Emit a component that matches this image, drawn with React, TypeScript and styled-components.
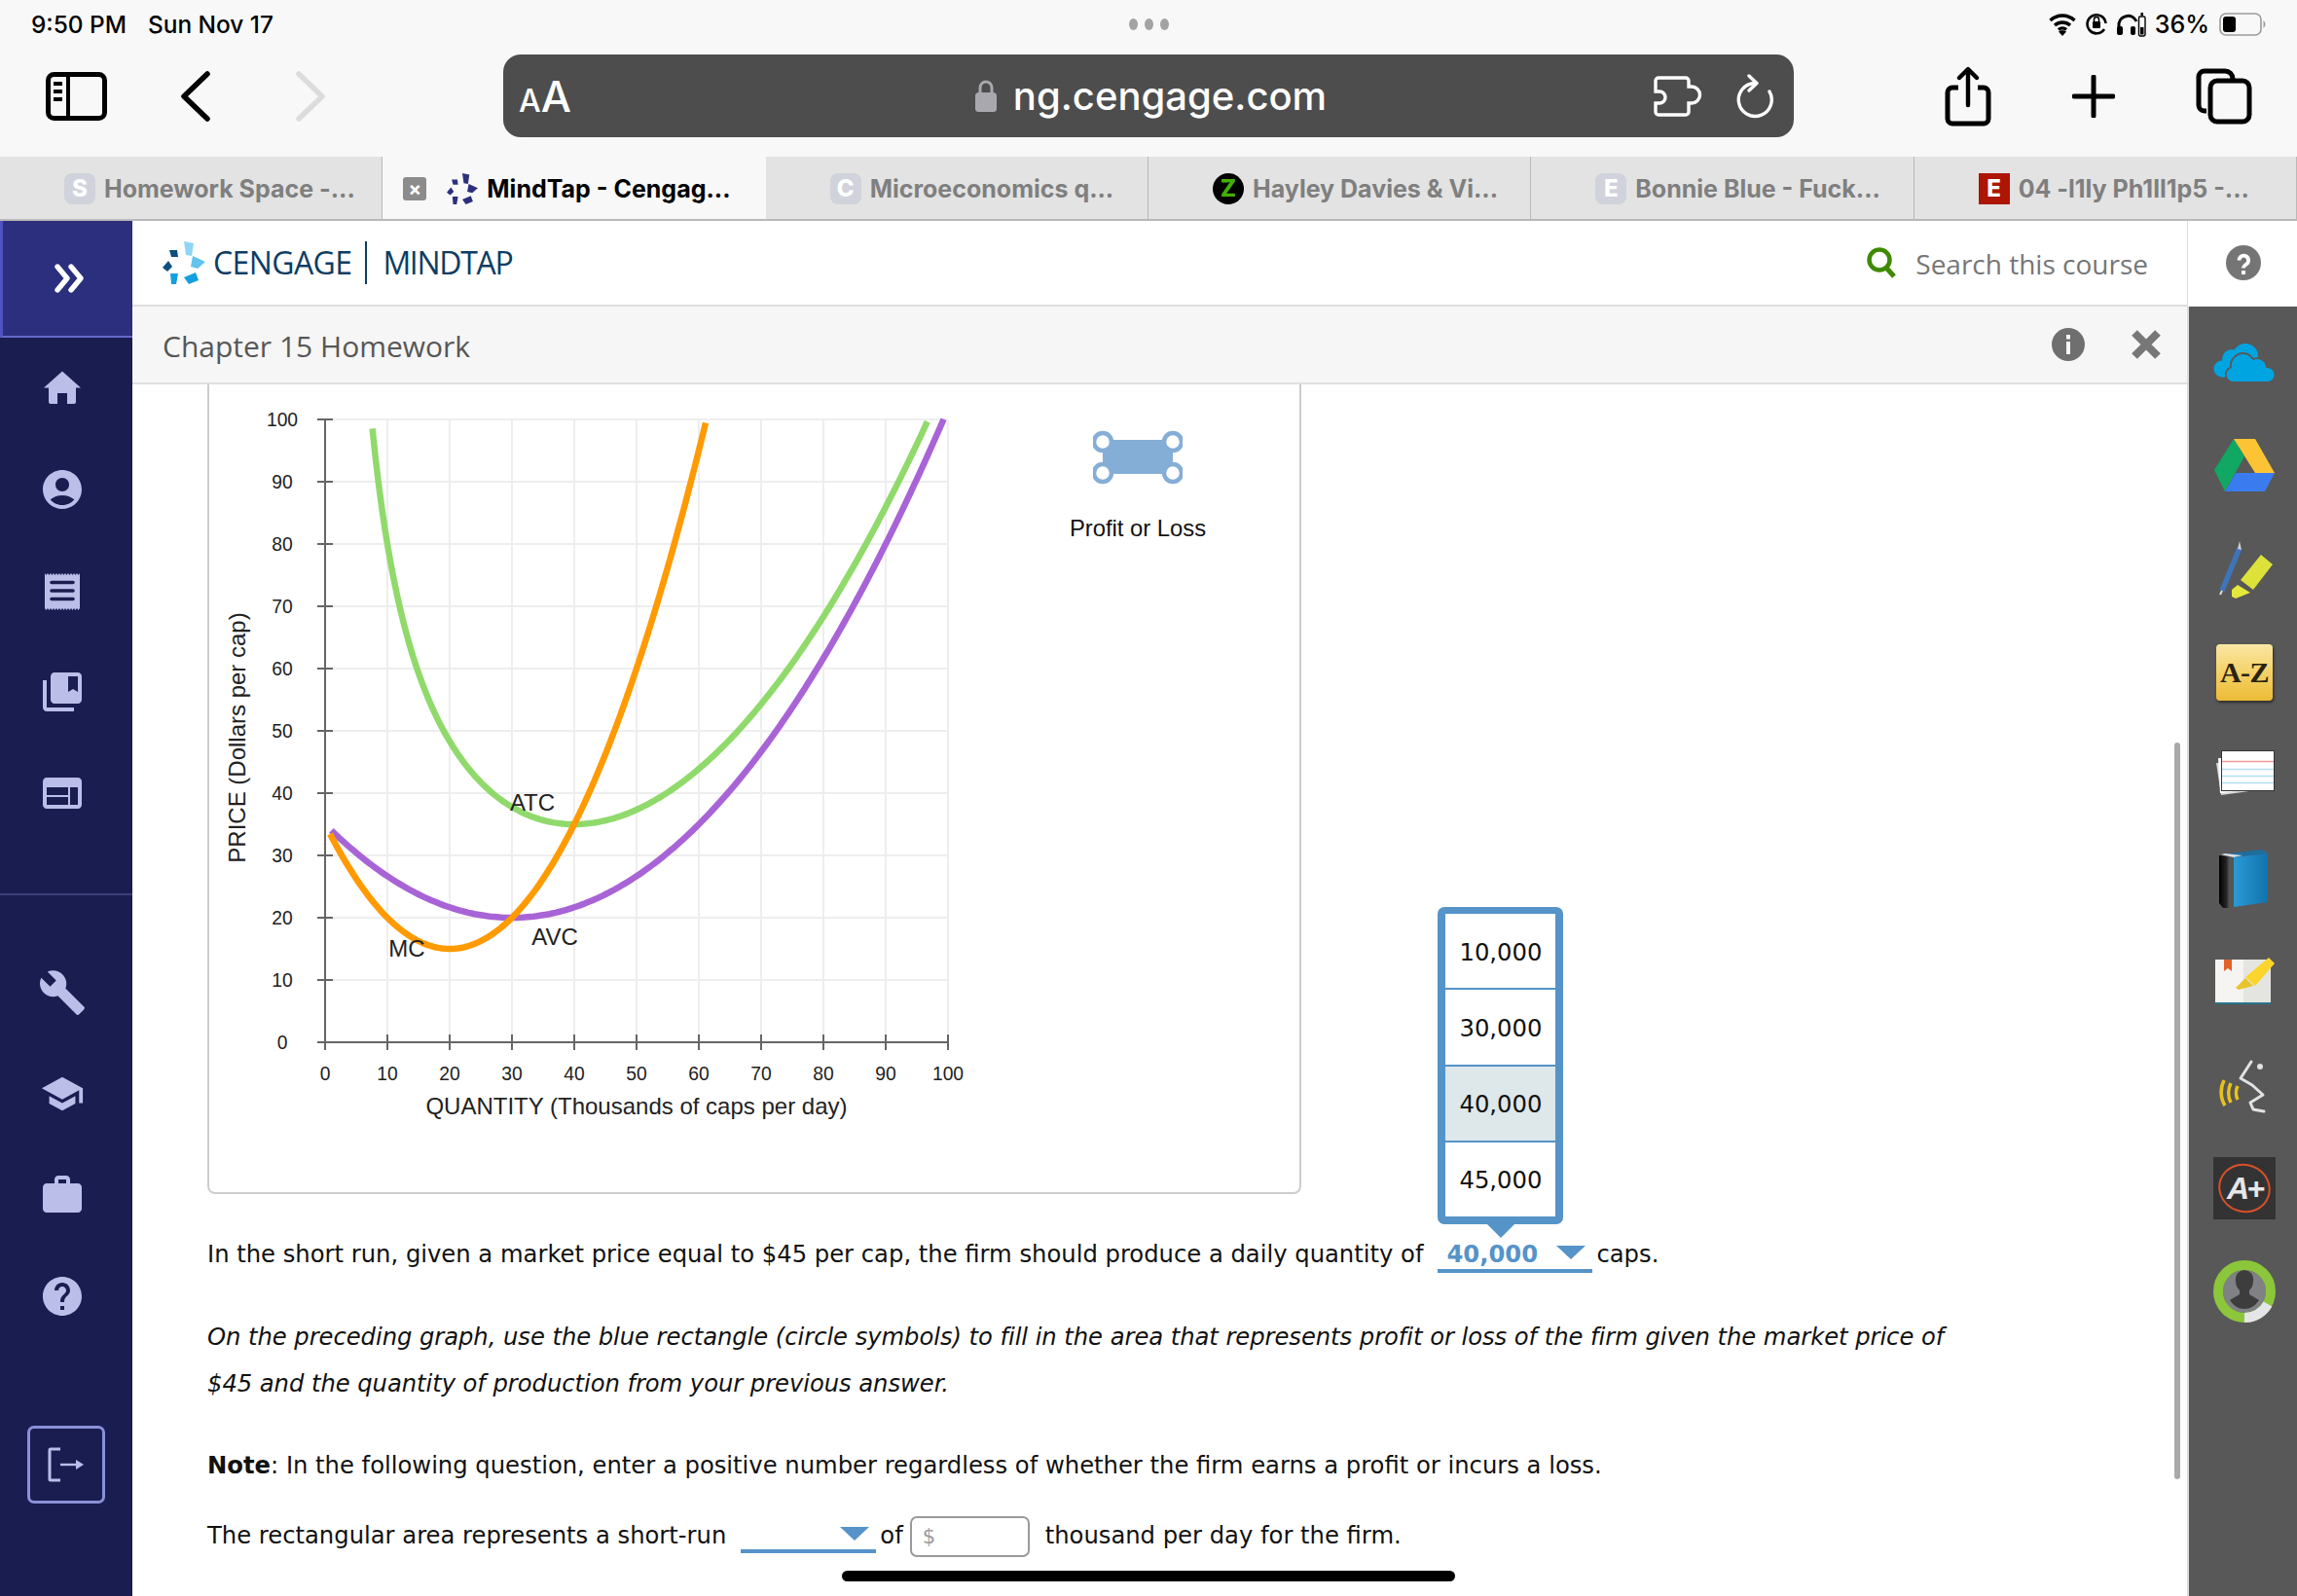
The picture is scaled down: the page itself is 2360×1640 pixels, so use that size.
import React from 'react';
import styled, { createGlobalStyle } from 'styled-components';
import { MdAccountCircle, MdCollectionsBookmark, MdWeb, MdBuild, MdSchool, MdWork, MdHelp } from 'react-icons/md';

const Global = createGlobalStyle`
  html, body { margin: 0; padding: 0; background: #fff; }
  * { box-sizing: border-box; }
`;

const Frame = styled.div`
  position: relative;
  width: 2360px;
  height: 1640px;
  overflow: hidden;
  display: flex;
  flex-direction: column;
  background: #f8f8f8;
  font-family: Inter, "Liberation Sans", sans-serif;
`;

/* ---------- iPad status bar ---------- */
const StatusBar = styled.div`
  height: 50px;
  display: grid;
  grid-template-columns: 1fr auto 1fr;
  align-items: center;
  font-size: 24.4px;
  font-weight: 500;
  color: #000;
`;
const StatusLeft = styled.div`display: flex; gap: 22px; padding-left: 32px;`;
const Dots = styled.div`display: flex; gap: 7px;`;
const Dot = styled.span`width: 9px; height: 12px; border-radius: 50%; background: #a3a3a3;`;
const StatusRight = styled.div`display: flex; justify-content: flex-end; align-items: center; padding-right: 32px; gap: 10px;`;
const StatusSvg = styled.svg`display: block; flex: none;`;
const BatteryPct = styled.span`font-size: 25px; font-weight: 500; margin-left: -1px;`;

/* ---------- Safari toolbar ---------- */
const Toolbar = styled.div`
  height: 111px;
  display: flex;
  align-items: center;
  padding: 0 0 14px 47px;
`;
const Nav = styled.div`display: flex; align-items: center; width: 470px;`;
const ToolIcon = styled.svg<{ $ml?: number }>`display: block; flex: none; margin-left: ${p => p.$ml ?? 0}px;`;
const UrlBar = styled.div`
  width: 1326px;
  height: 85px;
  border-radius: 18px;
  background: #4d4d4d;
  color: #fff;
  display: grid;
  grid-template-columns: 1fr auto 1fr;
  align-items: center;
  padding: 0 20px 0 16px;
`;
const AaText = styled.div`font-weight: 500; font-size: 44px; display: flex; align-items: baseline; line-height: 1;`;
const AaSmall = styled.span`font-size: 32px;`;
const Host = styled.div`display: flex; align-items: center; gap: 17px; margin-left: 9px;`;
const HostText = styled.span`font-size: 40px; font-weight: 500; line-height: 1;`;
const UrlRight = styled.div`display: flex; justify-content: flex-end; align-items: center; gap: 32px;`;
const ToolRight = styled.div`display: flex; align-items: center; margin-left: 155px;`;

/* ---------- Tabs ---------- */
const Tabs = styled.div`
  height: 66px;
  display: grid;
  grid-template-columns: repeat(6, 1fr);
  background: #e3e3e3;
  border-bottom: 2px solid #b9b9b9;
`;
const Tab = styled.div<{ $active?: boolean }>`
  display: flex;
  align-items: center;
  gap: 9px;
  padding: 1px 0 0 ${p => (p.$active ? 21 : 66)}px;
  background: ${p => (p.$active ? '#f8f8f8' : 'transparent')};
  color: ${p => (p.$active ? '#000' : '#7f7f7f')};
  border-right: 1px solid ${p => (p.$active ? 'transparent' : '#b9b9b9')};
  font-size: 25px;
  font-weight: 700;
  white-space: nowrap;
`;
const CloseBox = styled.div`
  width: 24px; height: 24px; border-radius: 3px; background: #8c8c8c; color: #fff;
  display: flex; align-items: center; justify-content: center; margin-right: 12px;
  font-size: 20px; font-weight: 700; line-height: 1;
`;
const Favicon = styled.div<{ $bg: string; $fg?: string; $round?: boolean }>`
  width: 32px; height: 32px; flex: none;
  border-radius: ${p => (p.$round ? '50%' : p.$bg === '#ad1505' ? '0' : '8px')};
  background: ${p => p.$bg};
  color: ${p => p.$fg ?? '#fff'};
  display: flex; align-items: center; justify-content: center;
  font-size: 24px; font-weight: 800; line-height: 1;
`;

/* ---------- Main three-column app ---------- */
const Main = styled.div`flex: 1; display: flex; min-height: 0; background: #fff;`;

const Sidebar = styled.nav`
  width: 136px;
  flex: none;
  background: #1a1d50;
  display: flex;
  flex-direction: column;
`;
const Toggle = styled.div`
  height: 120px;
  flex: none;
  background: #2b2f7e;
  border-left: 3px solid #4f53c0;
  border-bottom: 2px solid #6468cc;
  display: flex;
  align-items: center;
  padding-left: 53px;
`;
const NavGroup = styled.div<{ $divided?: boolean }>`
  display: flex;
  flex-direction: column;
  padding: ${p => (p.$divided ? '48px 0 0' : '0 0 51px')};
  border-bottom: ${p => (p.$divided ? '0' : '2px solid #3c4078')};
`;
const NavItem = styled.div`
  width: 128px;
  height: 104px;
  flex: none;
  display: flex;
  align-items: center;
  justify-content: center;
  color: #babee8;
`;
const NavSvg = styled.svg`display: block; color: #babee8;`;
const Logout = styled.div`
  width: 80px;
  height: 80px;
  margin: 81px 0 0 28px;
  border: 3.5px solid #8a90d8;
  border-radius: 7px;
  display: flex;
  align-items: center;
  justify-content: center;
`;

const Center = styled.div`flex: 1; min-width: 0; display: flex; flex-direction: column; position: relative;`;
const BrandBar = styled.header`
  height: 88px;
  flex: none;
  display: flex;
  align-items: center;
  padding: 0 40px 0 31px;
  border-bottom: 2px solid #dedede;
  background: #fff;
`;
const LogoSvg = styled.svg`flex: none; margin-right: 8px;`;
const BrandWord = styled.span<{ $ls: number }>`
  font-family: "Open Sans", sans-serif;
  font-size: 32px;
  font-weight: 400;
  letter-spacing: ${p => p.$ls}px;
  color: #0d3d64;
  line-height: 1;
`;
const BrandRule = styled.span`width: 2px; height: 44px; background: #0d3d64; margin: 0 16px 0 14px;`;
const SearchBox = styled.div`margin-left: auto; display: flex; align-items: center; gap: 19px;`;
const SearchText = styled.span`font-family: "Open Sans", sans-serif; font-size: 28px; color: #767676; font-weight: 400; padding-top: 2px;`;

const TitleBar = styled.div`
  height: 80px;
  flex: none;
  display: flex;
  align-items: center;
  padding: 0 26px 0 31px;
  background: #f6f6f6;
  border-bottom: 2px solid #e0e0e0;
`;
const Title = styled.h1`
  margin: 0;
  padding-top: 2px;
  font-family: "Open Sans", sans-serif;
  font-size: 30px;
  font-weight: 400;
  color: #575757;
`;
const TitleActions = styled.div`margin-left: auto; display: flex; align-items: center; gap: 47px;`;

const Content = styled.div`
  flex: 1;
  min-height: 0;
  overflow: hidden;
  padding-left: 77px;
  font-family: "DejaVu Sans", Verdana, sans-serif;
  font-size: 24.25px;
  color: #111;
`;
const GraphPanel = styled.section`
  width: 1124px;
  height: 832px;
  border: 2px solid #cdcdcd;
  border-top: 0;
  border-radius: 0 0 8px 8px;
  display: flex;
`;
const GraphSvg = styled.svg`display: block; flex: none;`;
const Legend = styled.div`
  width: 200px;
  margin-left: 74px;
  padding-top: 47px;
  display: flex;
  flex-direction: column;
  align-items: center;
`;
const LegendLabel = styled.div`
  margin-top: 31px;
  font-family: "Liberation Sans", Arial, sans-serif;
  font-size: 23.8px;
  line-height: 28px;
  color: #111;
  white-space: nowrap;
`;
const ChartLabel = styled.text`
  font-family: "Liberation Sans", Arial, sans-serif;
  font-size: 19.3px;
  fill: #222;
  text-anchor: middle;
`;
const AxisTitle = styled(ChartLabel)`font-size: 24px;`;

const Row = styled.div<{ $mt: number }>`
  margin-top: ${p => p.$mt}px;
  min-height: 48px;
  line-height: 48px;
  display: flex;
  align-items: flex-start;
  white-space: pre;
`;
const ItalicBlock = styled.p<{ $mt: number }>`
  margin: ${p => p.$mt}px 0 0;
  line-height: 48px;
  font-style: italic;
  white-space: pre;
  letter-spacing: -0.05px;
`;
const Strong = styled.strong`font-weight: 700;`;
const Select = styled.div<{ $width: number; $height: number; $ml: number; $mr: number }>`
  position: relative;
  flex: none;
  width: ${p => p.$width}px;
  height: ${p => p.$height}px;
  margin: 0 ${p => p.$mr}px 0 ${p => p.$ml}px;
  border-bottom: 4px solid #5593c8;
  display: flex;
  justify-content: space-between;
  padding: 0 7px 0 9px;
  color: #5593c8;
  font-weight: 700;
`;
const Caret = styled.span`
  margin: 15px 0 0 auto;
  width: 0;
  height: 0;
  border-left: 15px solid transparent;
  border-right: 15px solid transparent;
  border-top: 14px solid #5593c8;
`;
const Popover = styled.div`
  position: absolute;
  left: 0;
  bottom: 46px;
  width: 129px;
  height: 326px;
  border: 8px solid #5593c8;
  border-top-width: 7px;
  border-radius: 7px;
  background: #fff;
  color: #111;
  font-weight: 400;
  display: flex;
  flex-direction: column;
  z-index: 2;
  &::after {
    content: '';
    position: absolute;
    left: 43px;
    bottom: -22px;
    border-left: 14px solid transparent;
    border-right: 14px solid transparent;
    border-top: 14px solid #5593c8;
  }
`;
const Option = styled.div<{ $selected?: boolean }>`
  flex: 1;
  display: flex;
  align-items: center;
  justify-content: center;
  padding-top: 3px;
  background: ${p => (p.$selected ? '#dee7ea' : '#fff')};
  border-bottom: 2px solid #5593c8;
  line-height: 1;
  &:last-child { border-bottom: 0; }
`;
const MoneyInput = styled.div`
  flex: none;
  width: 123px;
  height: 42px;
  margin: 4px 16px 0 7px;
  padding-left: 11px;
  border: 2px solid #9a9a9a;
  border-radius: 7px;
  color: #9a9a9a;
  font-size: 21px;
  line-height: 38px;
`;
const Scrollbar = styled.div`
  position: absolute;
  right: 7px;
  top: 536px;
  width: 6px;
  height: 757px;
  border-radius: 3px;
  background: #a9a9a9;
`;

const Rail = styled.aside`
  width: 113px;
  flex: none;
  display: flex;
  flex-direction: column;
`;
const HelpCell = styled.div`
  height: 88px;
  flex: none;
  background: #fff;
  border-left: 1px solid #dedede;
  display: flex;
  align-items: center;
  justify-content: center;
  padding: 0 0 2px 1px;
`;
const RailBody = styled.div`
  flex: 1;
  background: #585858;
  border-left: 2px solid #dcdcdc;
  display: flex;
  flex-direction: column;
  align-items: center;
  gap: 42px;
  padding: 26px 0 0 3px;
`;
const RailSlot = styled.div`width: 64px; height: 64px; flex: none; display: flex; align-items: center; justify-content: center;`;
const RailSvg = styled.svg`display: block;`;
const AzTile = styled.div`
  width: 58px;
  height: 58px;
  border-radius: 4px;
  background: linear-gradient(#fae7a4, #f3cf62 55%, #ecbb35);
  box-shadow: 1px 2px 3px rgba(0, 0, 0, 0.5);
  color: #2a2310;
  font-family: "Liberation Serif", serif;
  font-weight: 700;
  font-size: 30px;
  letter-spacing: -0.5px;
  display: flex;
  align-items: center;
  justify-content: center;
`;
const GradeTile = styled.div`
  position: relative;
  width: 64px;
  height: 64px;
  background: #333;
  display: flex;
  align-items: center;
  justify-content: center;
`;
const GradeRing = styled.span`
  position: absolute;
  left: 5px;
  top: 7px;
  width: 54px;
  height: 50px;
  border: 2.5px solid #d8502a;
  border-radius: 50%;
  transform: rotate(20deg);
`;
const GradeText = styled.span`
  font-family: "Liberation Sans", sans-serif;
  font-style: italic;
  font-weight: 700;
  font-size: 32px;
  letter-spacing: -3px;
  color: #e6e6e6;
  line-height: 1;
`;
const HomeBar = styled.div`
  position: absolute;
  left: 865px;
  top: 1614px;
  width: 630px;
  height: 11px;
  border-radius: 6px;
  background: #000;
`;

/* ---------- data ---------- */
const X = (q: number) => 119 + 6.4 * q;
const Y = (p: number) => 676 - 6.4 * p;
const avc = (q: number) => 20 + ((q - 30) * (q - 30)) / 60;
const mc = (q: number) => avc(q) + (q * (q - 30)) / 30;
const atc = (q: number) => avc(q) + 533.3 / q;
const curve = (fn: (q: number) => number, from: number, to: number) => {
  const pts: string[] = [];
  for (let q = from; q < to; q += 0.5) pts.push(`${X(q).toFixed(1)},${Y(fn(q)).toFixed(1)}`);
  pts.push(`${X(to).toFixed(1)},${Y(fn(to)).toFixed(1)}`);
  return 'M' + pts.join('L');
};
const ticks = [0, 10, 20, 30, 40, 50, 60, 70, 80, 90, 100];

const receiptPath = (() => {
  const n = 12;
  const w = 36 / n;
  let top = 'M6 6';
  for (let i = 0; i < n; i++) top += `l${w / 2} 2l${w / 2} -2`;
  let bot = 'V42';
  for (let i = 0; i < n; i++) bot += `l${-w / 2} 2l${-w / 2} -2`;
  return top + bot + 'Z';
})();

const Graph = () => (
  <GraphSvg width={780} height={780} viewBox="0 0 780 780">
    {ticks.slice(1).map(t => (
      <g key={t} stroke="#eeeeee" strokeWidth={2}>
        <line x1={X(0)} x2={X(100)} y1={Y(t)} y2={Y(t)} />
        <line x1={X(t)} x2={X(t)} y1={Y(0)} y2={Y(100)} />
      </g>
    ))}
    <g stroke="#666" strokeWidth={2}>
      <line x1={X(0)} x2={X(0)} y1={Y(100)} y2={Y(0)} />
      <line x1={X(0)} x2={X(100)} y1={Y(0)} y2={Y(0)} />
      {ticks.map(t => (
        <g key={t}>
          <line x1={X(0) - 8} x2={X(0) + 8} y1={Y(t)} y2={Y(t)} />
          <line x1={X(t)} x2={X(t)} y1={Y(0) - 8} y2={Y(0) + 8} />
        </g>
      ))}
    </g>
    {ticks.map(t => (
      <g key={t}>
        <ChartLabel x={75} y={Y(t) + 7}>{t}</ChartLabel>
        <ChartLabel x={X(t)} y={715}>{t}</ChartLabel>
      </g>
    ))}
    <path d={curve(atc, 7.6, 96.7)} fill="none" stroke="#90da6c" strokeWidth={6.5} />
    <path d={curve(avc, 1, 99.3)} fill="none" stroke="#a864d6" strokeWidth={6.5} />
    <path d={curve(mc, 0.8, 61.1)} fill="none" stroke="#ff9a00" strokeWidth={6.5} />
    <AxisTitle x={439} y={750}>QUANTITY (Thousands of caps per day)</AxisTitle>
    <AxisTitle transform="translate(37 363) rotate(-90)">PRICE (Dollars per cap)</AxisTitle>
    <AxisTitle x={332} y={438}>ATC</AxisTitle>
    <AxisTitle x={355} y={576}>AVC</AxisTitle>
    <AxisTitle x={203} y={588}>MC</AxisTitle>
  </GraphSvg>
);

const CengageMark = ({ c }: { c: string[] }) => (
  <>
    <polygon points="22,0 32,2 30,15 24,14" fill={c[0]} />
    <polygon points="7,9 15,9 16,16 9,16" fill={c[1]} />
    <polygon points="0,27 6,20 10,26 5,31" fill={c[1]} />
    <polygon points="31,15 44,21 36,28 29,26" fill={c[2]} />
    <polygon points="22,37 34,32 37,40 27,44" fill={c[3]} />
    <polygon points="8,33 16,33 14,44 9,44" fill={c[3]} />
  </>
);

export default function App() {
  return (
    <Frame>
      <Global />
      <StatusBar>
        <StatusLeft><span>9:50 PM</span><span>Sun Nov 17</span></StatusLeft>
        <Dots><Dot /><Dot /><Dot /></Dots>
        <StatusRight>
          <StatusSvg width="28" height="24" viewBox="0 0 28 24">
            <path d="M1.5 8 A18 18 0 0 1 26.5 8 M6 13 A12 12 0 0 1 22 13 M10 17.5 A6 6 0 0 1 18 17.5" fill="none" stroke="#000" strokeWidth="3.4" />
            <path d="M14 24l-4-4.5a6 6 0 0 1 8 0z" />
          </StatusSvg>
          <StatusSvg width="22" height="24" viewBox="0 0 22 24">
            <path d="M19 17A9.5 9.5 0 1 1 20.5 11" fill="none" stroke="#000" strokeWidth="2.6" />
            <rect x="7" y="9" width="8" height="7" rx="1" />
            <path d="M8.5 9V7a2.5 2.5 0 0 1 5 0v2" fill="none" stroke="#000" strokeWidth="1.6" />
          </StatusSvg>
          <StatusSvg width="30" height="26" viewBox="0 0 30 26">
            <path d="M2 20V12a9.5 9.5 0 0 1 18 -2" fill="none" stroke="#000" strokeWidth="3" />
            <rect x="0" y="15" width="6" height="9" rx="2" />
            <rect x="14" y="15" width="5" height="9" rx="2" />
            <rect x="22.5" y="5" width="6.5" height="20" rx="1.4" fill="none" stroke="#000" strokeWidth="1.4" />
            <rect x="24" y="16" width="3.5" height="7.5" />
            <rect x="24.5" y="1" width="2.5" height="3" />
          </StatusSvg>
          <BatteryPct>36%</BatteryPct>
          <StatusSvg width="48" height="24" viewBox="0 0 48 24">
            <rect x="1" y="1" width="42" height="22" rx="6" fill="none" stroke="#9a9a9a" strokeWidth="1.6" />
            <rect x="4" y="4" width="13" height="16" rx="3" />
            <path d="M45.5 8a5 5 0 0 1 0 8z" fill="#9a9a9a" />
          </StatusSvg>
        </StatusRight>
      </StatusBar>

      <Toolbar>
        <Nav>
          <ToolIcon width="63" height="50" viewBox="0 0 63 50">
            <rect x="2.5" y="2.5" width="58" height="45" rx="6" fill="none" stroke="#000" strokeWidth="5" />
            <line x1="23" y1="3" x2="23" y2="47" stroke="#000" strokeWidth="4" />
            <rect x="8" y="10" width="9" height="4" fill="#000" />
            <rect x="8" y="18" width="9" height="4" fill="#000" />
            <rect x="8" y="26" width="9" height="4" fill="#000" />
          </ToolIcon>
          <ToolIcon $ml={76} width="30" height="52" viewBox="0 0 30 52">
            <polyline points="27,3 3,26 27,49" fill="none" stroke="#000" strokeWidth="5.5" strokeLinecap="round" strokeLinejoin="round" />
          </ToolIcon>
          <ToolIcon $ml={88} width="30" height="52" viewBox="0 0 30 52">
            <polyline points="3,3 27,26 3,49" fill="none" stroke="#dcdcdc" strokeWidth="5.5" strokeLinecap="round" strokeLinejoin="round" />
          </ToolIcon>
        </Nav>
        <UrlBar>
          <AaText><AaSmall>A</AaSmall>A</AaText>
          <Host>
            <svg width="22" height="33" viewBox="0 0 22 33">
              <path d="M5 15V8a6 6 0 0 1 12 0v7" fill="none" stroke="#a8a8ae" strokeWidth="3" />
              <rect x="0" y="13" width="22" height="20" rx="3.5" fill="#a8a8ae" />
            </svg>
            <HostText>ng.cengage.com</HostText>
          </Host>
          <UrlRight>
            <svg width="52" height="42" viewBox="0 0 52 42">
              <path d="M4 2h28a3 3 0 0 1 3 3v6h3a7.5 7.5 0 0 1 0 17h-3v9a3 3 0 0 1-3 3H4a3 3 0 0 1-3-3v-9h4a5 5 0 0 0 0-12H1V5a3 3 0 0 1 3-3z" fill="none" stroke="#fff" strokeWidth="3.4" transform="translate(1 0)" />
            </svg>
            <svg width="40" height="46" viewBox="0 0 40 46">
              <path d="M20 9.500A17 17 0 1 0 35 18" fill="none" stroke="#fff" strokeWidth="3.4" strokeLinecap="round" />
              <path d="M14 2l8 7.500-8 7.500" fill="none" stroke="#fff" strokeWidth="3.4" strokeLinecap="round" strokeLinejoin="round" />
            </svg>
          </UrlRight>
        </UrlBar>
        <ToolRight>
          <ToolIcon width="48" height="62" viewBox="0 0 48 62">
            <path d="M14 22H8a5 5 0 0 0-5 5v27a5 5 0 0 0 5 5h32a5 5 0 0 0 5-5V27a5 5 0 0 0-5-5h-6" fill="none" stroke="#000" strokeWidth="5" />
            <path d="M24 40V4M15 12l9-9 9 9" fill="none" stroke="#000" strokeWidth="4.4" strokeLinecap="round" strokeLinejoin="round" />
          </ToolIcon>
          <ToolIcon $ml={83} width="44" height="44" viewBox="0 0 44 44">
            <path d="M22 2v40M2 22h40" stroke="#000" strokeWidth="5" strokeLinecap="round" />
          </ToolIcon>
          <ToolIcon $ml={83} width="58" height="58" viewBox="0 0 58 58">
            <path d="M11 44H9a6 6 0 0 1-6-6V9a6 6 0 0 1 6-6h21a8 8 0 0 1 8 8" fill="none" stroke="#000" strokeWidth="5" />
            <rect x="15" y="13" width="40" height="42" rx="7" fill="none" stroke="#000" strokeWidth="5" />
          </ToolIcon>
        </ToolRight>
      </Toolbar>

      <Tabs>
        <Tab><Favicon $bg="#d0d2dc">S</Favicon>Homework Space -...</Tab>
        <Tab $active>
          <CloseBox>×</CloseBox>
          <svg width="32" height="32" viewBox="0 0 44 44"><CengageMark c={['#2b2f7e', '#2b2f7e', '#2b2f7e', '#2b2f7e']} /></svg>
          MindTap - Cengag...
        </Tab>
        <Tab><Favicon $bg="#d0d2dc">C</Favicon>Microeconomics q...</Tab>
        <Tab><Favicon $bg="#000" $fg="#44b000" $round>Z</Favicon>Hayley Davies &amp; Vi...</Tab>
        <Tab><Favicon $bg="#d0d2dc">E</Favicon>Bonnie Blue - Fuck...</Tab>
        <Tab><Favicon $bg="#ad1505">E</Favicon>04 -l1ly Ph1ll1p5 -...</Tab>
      </Tabs>

      <Main>
        <Sidebar>
          <Toggle>
            <svg width="32" height="30" viewBox="0 0 32 30">
              <path d="M3 3l10 12L3 27M17 3l10 12-10 12" fill="none" stroke="#fff" strokeWidth="5.4" strokeLinecap="round" strokeLinejoin="round" />
            </svg>
          </Toggle>
          <NavGroup>
            <NavItem>
              <NavSvg width="48" height="48" viewBox="0 0 48 48">
                <path d="M24 6.500L43 23.500H38V38a2 2 0 0 1-2 2H29V29H19V40H12a2 2 0 0 1-2-2V23.500H5Z" fill="currentColor" />
              </NavSvg>
            </NavItem>
            <NavItem><MdAccountCircle size={48} /></NavItem>
            <NavItem>
              <NavSvg width="48" height="48" viewBox="0 0 48 48">
                <path d={receiptPath} fill="currentColor" />
                <path d="M13 15.500h22M13 24h22M13 32.500h22" stroke="#1a1d50" strokeWidth="3.600" strokeLinecap="round" />
              </NavSvg>
            </NavItem>
            <NavItem><MdCollectionsBookmark size={48} /></NavItem>
            <NavItem><MdWeb size={48} /></NavItem>
          </NavGroup>
          <NavGroup $divided>
            <NavItem><MdBuild size={50} /></NavItem>
            <NavItem><MdSchool size={46} /></NavItem>
            <NavItem><MdWork size={48} /></NavItem>
            <NavItem><MdHelp size={48} /></NavItem>
          </NavGroup>
          <Logout>
            <svg width="38" height="36" viewBox="0 0 38 36">
              <path d="M13 2H3a1 1 0 0 0-1 1v30a1 1 0 0 0 1 1h10" fill="none" stroke="#babee8" strokeWidth="3" />
              <path d="M13 18h18" stroke="#babee8" strokeWidth="2.400" />
              <path d="M29 13l8 5-8 5z" fill="#babee8" />
            </svg>
          </Logout>
        </Sidebar>

        <Center>
          <BrandBar>
            <LogoSvg width="44" height="44" viewBox="0 0 44 44">
              <CengageMark c={['#8fd6f6', '#0d4f80', '#63c3ec', '#14a0de']} />
            </LogoSvg>
            <BrandWord $ls={-0.6}>CENGAGE</BrandWord>
            <BrandRule />
            <BrandWord $ls={-1.3}>MINDTAP</BrandWord>
            <SearchBox>
              <svg width="32" height="32" viewBox="0 0 32 32">
                <circle cx="14" cy="13" r="10.500" fill="none" stroke="#3f8a00" strokeWidth="4.500" />
                <path d="M20 20l9 10" stroke="#3f8a00" strokeWidth="5" />
              </svg>
              <SearchText>Search this course</SearchText>
            </SearchBox>
          </BrandBar>
          <TitleBar>
            <Title>Chapter 15 Homework</Title>
            <TitleActions>
              <svg width="34" height="34" viewBox="0 0 34 34">
                <circle cx="17" cy="17" r="17" fill="#6f6f6f" />
                <rect x="15" y="7" width="4" height="4.500" fill="#f6f6f6" />
                <rect x="15" y="14" width="4" height="13" fill="#f6f6f6" />
              </svg>
              <svg width="32" height="32" viewBox="0 0 32 32">
                <path d="M4 4l24 24M28 4L4 28" stroke="#777" strokeWidth="8" />
              </svg>
            </TitleActions>
          </TitleBar>
          <Content>
            <GraphPanel>
              <Graph />
              <Legend>
                <svg width="92" height="56" viewBox="0 0 92 56">
                  <rect x="10" y="10" width="72" height="35" fill="#85aed6" />
                  <g fill="#fff" stroke="#85aed6" strokeWidth="4.500">
                    <circle cx="10" cy="12" r="9" />
                    <circle cx="82" cy="12" r="9" />
                    <circle cx="10" cy="44" r="9" />
                    <circle cx="82" cy="44" r="9" />
                  </g>
                </svg>
                <LegendLabel>Profit or Loss</LegendLabel>
              </Legend>
            </GraphPanel>
            <Row $mt={38}>
              <span>In the short run, given a market price equal to $45 per cap, the firm should produce a daily quantity of</span>
              <Select $width={159} $height={43} $ml={15} $mr={4}>
                <span>40,000</span>
                <Caret />
                <Popover>
                  <Option>10,000</Option>
                  <Option>30,000</Option>
                  <Option $selected>40,000</Option>
                  <Option>45,000</Option>
                </Popover>
              </Select>
              <span>caps.</span>
            </Row>
            <ItalicBlock $mt={37}>
              On the preceding graph, use the blue rectangle (circle symbols) to fill in the area that represents profit or loss of the firm given the market price of{'\n'}$45 and the quantity of production from your previous answer.
            </ItalicBlock>
            <Row $mt={36}>
              <span><Strong>Note</Strong>: In the following question, enter a positive number regardless of whether the firm earns a profit or incurs a loss.</span>
            </Row>
            <Row $mt={24}>
              <span>The rectangular area represents a short-run</span>
              <Select $width={139} $height={42} $ml={15} $mr={4}>
                <Caret />
              </Select>
              <span>of</span>
              <MoneyInput>$</MoneyInput>
              <span>thousand per day for the firm.</span>
            </Row>
          </Content>
          <Scrollbar />
        </Center>

        <Rail>
          <HelpCell>
            <svg width="36" height="36" viewBox="0 0 36 36">
              <circle cx="18" cy="18" r="18" fill="#757575" />
              <path d="M13.500 15.500a4.800 4.800 0 1 1 7.500 4c-2 1.300-3 2-3 4" fill="none" stroke="#fff" strokeWidth="3.800" />
              <rect x="16" y="26" width="4" height="4" fill="#fff" />
            </svg>
          </HelpCell>
          <RailBody>
            <RailSlot>
              <RailSvg width="64" height="64" viewBox="0 0 64 64">
                <g fill="#00a4e0">
                  <circle cx="9" cy="38" r="8.500" /><circle cx="19" cy="28" r="10" /><circle cx="33" cy="25" r="13" /><rect x="9" y="30" width="30" height="16.500" />
                </g>
                <path d="M21 52a8 8 0 0 1-3-15.500a12.500 12.500 0 0 1 23-8.500a10 10 0 0 1 14 8a7.800 7.800 0 0 1 1 16z" fill="#00a4e0" stroke="#585858" strokeWidth="1.800" />
              </RailSvg>
            </RailSlot>
            <RailSlot>
              <RailSvg width="64" height="64" viewBox="0 0 64 64">
                <polygon points="1,36 21,4 32,22 12,58" fill="#10a862" />
                <polygon points="21,4 43,4 63,39 43,39" fill="#fcc434" />
                <polygon points="12,58 23,39 63,39 53,58" fill="#3a7cf0" />
              </RailSvg>
            </RailSlot>
            <RailSlot>
              <RailSvg width="64" height="64" viewBox="0 0 64 64">
                <path d="M27 10L9 54" stroke="#3f74b8" strokeWidth="5.500" />
                <path d="M27 3l-2 8 4 1z" fill="#cfcfcf" />
                <path d="M9 54l-2 4" stroke="#ddd" strokeWidth="2" />
                <polygon points="49,17 61,27 41,53 28,43" fill="#dde23a" />
                <polygon points="25,48 38,56 23,62 19,60 19,53" fill="#e3e83a" />
              </RailSvg>
            </RailSlot>
            <RailSlot><AzTile>A-Z</AzTile></RailSlot>
            <RailSlot>
              <RailSvg width="64" height="64" viewBox="0 0 64 64">
                <polygon points="3,19 8,52 58,45 56,20" fill="#d8d8d8" />
                <polygon points="5,14 7,50 60,44 55,14" fill="#fff" />
                <rect x="8.500" y="6.500" width="54" height="41" fill="#fff" stroke="#333" strokeWidth="1" />
                <path d="M9 17.500h53" stroke="#f29a9a" strokeWidth="1.500" />
                <path d="M9 25.500h53M9 32.500h53M9 39.500h53" stroke="#b5def2" strokeWidth="1.500" />
              </RailSvg>
            </RailSlot>
            <RailSlot>
              <RailSvg width="64" height="64" viewBox="0 0 64 64">
                <defs>
                  <linearGradient id="bk" x1="0" x2="1"><stop offset="0" stopColor="#2a9ad6" /><stop offset="1" stopColor="#1273ab" /></linearGradient>
                  <linearGradient id="sp" x1="0" x2="1"><stop offset="0" stopColor="#000" /><stop offset="0.5" stopColor="#262626" /><stop offset="0.7" stopColor="#555" /><stop offset="1" stopColor="#555" /></linearGradient>
                </defs>
                <polygon points="6,8 21,10 21,62 10,62 6,57" fill="url(#sp)" />
                <polygon points="8,7 50,2 56,6 21,10" fill="#1d6ea0" />
                <polygon points="8,7 21,10 30,8 12,6" fill="#ddd" />
                <polygon points="21,10 56,6 56,56 21,61" fill="url(#bk)" />
              </RailSvg>
            </RailSlot>
            <RailSlot>
              <RailSvg width="64" height="64" viewBox="0 0 64 64">
                <path d="M2 9h29v46H4a2 2 0 0 1-2-2z" fill="#f5f4f2" />
                <path d="M31 9h28v44a2 2 0 0 1-2 2H31z" fill="#e4e5e1" />
                <path d="M2 54h57" stroke="#2a7588" strokeWidth="1.800" />
                <polygon points="11,9 19,9 19,21 15,18 11,21" fill="#e2612b" />
                <polygon points="57,7 63,13 43,36 33,27" fill="#fbd52c" />
                <polygon points="33,28 41,36 26,40 23,38" fill="#e8c42b" />
              </RailSvg>
            </RailSlot>
            <RailSlot>
              <RailSvg width="64" height="64" viewBox="0 0 64 64">
                <path d="M11 27c-4 8-4 18 1 26M18 30c-3 6-3 14 0 20M25 33c-2 4-2 10 0 14" fill="none" stroke="#e8c21c" strokeWidth="3.600" />
                <path d="M39 8L28 25l12 7 11 10-13 8 3 7 11 2" fill="none" stroke="#e2e2e2" strokeWidth="3" strokeLinejoin="round" strokeLinecap="round" />
                <circle cx="48" cy="13" r="3" fill="#e2e2e2" />
              </RailSvg>
            </RailSlot>
            <RailSlot>
              <GradeTile><GradeRing /><GradeText>A+</GradeText></GradeTile>
            </RailSlot>
            <RailSlot>
              <RailSvg width="64" height="64" viewBox="0 0 64 64">
                <circle cx="32" cy="32" r="22" fill="#808184" />
                <path d="M32 10a9 10 0 0 1 9 12c0 4-2 7-4 9v4l10 6c-4 6-9 9-15 9s-11-3-15-9l10-6v-4c-2-2-4-5-4-9a9 10 0 0 1 9-12z" fill="#3d3d3d" />
                <circle cx="32" cy="32" r="27" fill="none" stroke="#8cc63a" strokeWidth="10" />
                <path d="M32 59a27 27 0 0 0 24-14" fill="none" stroke="#e4e6e7" strokeWidth="10" />
              </RailSvg>
            </RailSlot>
          </RailBody>
        </Rail>
      </Main>
      <HomeBar />
    </Frame>
  );
}
